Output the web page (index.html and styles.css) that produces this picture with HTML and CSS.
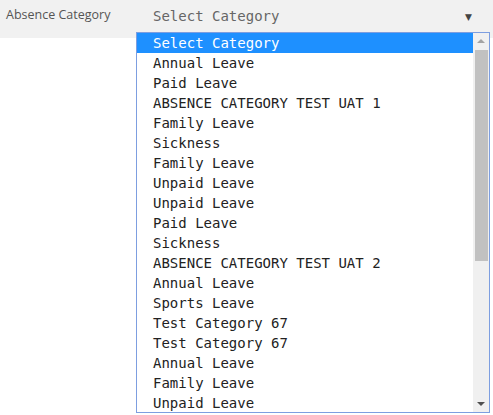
FILE: index.html
```html
<!DOCTYPE html>
<html>
<head>
<meta charset="utf-8">
<link rel="stylesheet" href="styles.css">
</head>
<body>
<div class="field">
  <label class="label">Absence Category</label>
  <div class="select">
    <span class="select-value">Select Category</span>
    <span class="select-arrow">▼</span>
  </div>
</div>
<div class="content"></div>
<div class="popup">
  <ul class="options">
    <li class="opt selected">Select Category</li>
    <li class="opt">Annual Leave</li>
    <li class="opt">Paid Leave</li>
    <li class="opt">ABSENCE CATEGORY TEST UAT 1</li>
    <li class="opt">Family Leave</li>
    <li class="opt">Sickness</li>
    <li class="opt">Family Leave</li>
    <li class="opt">Unpaid Leave</li>
    <li class="opt">Unpaid Leave</li>
    <li class="opt">Paid Leave</li>
    <li class="opt">Sickness</li>
    <li class="opt">ABSENCE CATEGORY TEST UAT 2</li>
    <li class="opt">Annual Leave</li>
    <li class="opt">Sports Leave</li>
    <li class="opt">Test Category 67</li>
    <li class="opt">Test Category 67</li>
    <li class="opt">Annual Leave</li>
    <li class="opt">Family Leave</li>
    <li class="opt">Unpaid Leave</li>
  </ul>
  <div class="scrollbar">
    <span class="sb-up"></span>
    <span class="sb-thumb"></span>
    <span class="sb-down"></span>
  </div>
</div>
</body>
</html>
```
FILE: styles.css
```css
html, body {
  margin: 0;
  padding: 0;
  background: #ffffff;
  width: 493px;
  height: 415px;
  overflow: hidden;
}
.field {
  display: flex;
  align-items: flex-start;
  height: 38px;
  background: #f1f1f1;
}
.label {
  font-family: "Open Sans", sans-serif;
  font-size: 12.5px;
  color: #555555;
  padding: 6px 0 0 6px;
  width: 153px;
  box-sizing: border-box;
  line-height: 18px;
}
.select {
  flex: 1;
  display: flex;
  justify-content: space-between;
  padding: 6px 0 0 0;
  line-height: 20px;
}
.select-value {
  font-family: "DejaVu Sans Mono", monospace;
  font-size: 14px;
  color: #666666;
}
.select-arrow {
  font-family: "DejaVu Sans", sans-serif;
  font-size: 9px;
  color: #444;
  margin-right: 21px;
  padding-top: 1px;
}
.content {
  height: 377px;
  background: #ffffff;
  border-bottom: 2px solid #5a2a2a;
}
.popup {
  position: absolute;
  left: 136px;
  top: 32px;
  width: 354px;
  height: 381px;
  box-sizing: border-box;
  border: 1px solid #7d9ee0;
  background: #ffffff;
  display: flex;
  overflow: hidden;
}
.options {
  list-style: none;
  margin: 0;
  padding: 0;
  flex: 1;
  overflow: hidden;
}
.opt {
  font-family: "DejaVu Sans Mono", monospace;
  font-size: 14px;
  line-height: 20px;
  height: 20px;
  padding-left: 16px;
  color: #222222;
  white-space: nowrap;
}
.opt.selected {
  background: #1e90ff;
  color: #ffffff;
}
.scrollbar {
  width: 16px;
  background: #f0f0f0;
  position: relative;
}
.sb-thumb {
  position: absolute;
  left: 2px;
  right: 1px;
  top: 17px;
  height: 211px;
  background: #c1c1c1;
}
.sb-up, .sb-down {
  position: absolute;
  left: 4px;
  width: 0;
  height: 0;
  border-left: 4px solid transparent;
  border-right: 4px solid transparent;
}
.sb-up {
  top: 6px;
  border-bottom: 4px solid #a3a3a3;
}
.sb-down {
  bottom: 6px;
  border-top: 4px solid #505050;
}
```
